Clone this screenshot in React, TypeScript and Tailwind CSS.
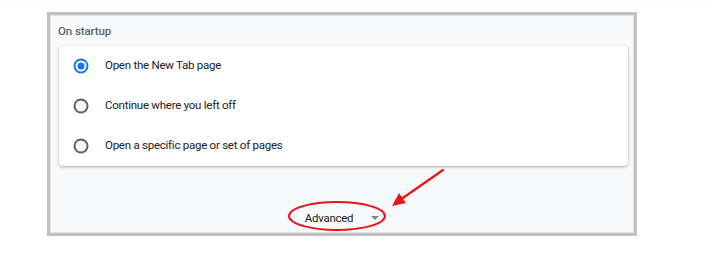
import React from "react";

const options = [
  { label: "Open the New Tab page", checked: true },
  { label: "Continue where you left off", checked: false },
  { label: "Open a specific page or set of pages", checked: false },
];

function Radio({ checked }: { checked: boolean }) {
  return (
    <svg width="16" height="16" viewBox="0 0 16 16">
      {checked ? (
        <>
          <circle cx="8" cy="8" r="6.5" fill="none" stroke="#1a73e8" strokeWidth="2" />
          <circle cx="8" cy="8" r="3.5" fill="#1a73e8" />
        </>
      ) : (
        <circle cx="8" cy="8" r="6.5" fill="none" stroke="#5f6368" strokeWidth="2" />
      )}
    </svg>
  );
}

export default function App() {
  return (
    <div
      className="relative w-[705px] h-[279px] bg-white overflow-hidden"
      style={{ fontFamily: "Roboto, 'Liberation Sans', sans-serif" }}
    >
      <div className="h-[6px] bg-[#fcfcfc]" />
      <div className="ml-[47px] mt-[6px] w-[590px] h-[224px] border-[3px] border-[#c1c1c1]">
        <div className="h-full border border-[#e4e4e4] bg-[#f8f9fa] flex flex-col">
          <div className="h-[30px] pl-[7px] pt-[2px] flex items-center text-[11.5px] tracking-[-0.1px] font-medium text-[#5f6368]">
            On startup
          </div>
          <div className="ml-[8px] w-[569px] bg-white rounded-[4px] shadow-[0_1px_2px_rgba(60,64,67,0.3),0_1px_3px_1px_rgba(60,64,67,0.1)] flex flex-col">
            {options.map((o) => (
              <div key={o.label} className="h-[40px] flex items-center">
                <div className="w-[46px] pl-[14px] flex items-center">
                  <Radio checked={o.checked} />
                </div>
                <span className="text-[11.5px] tracking-[-0.25px] text-[#202124]">{o.label}</span>
              </div>
            ))}
          </div>
          <div className="flex-1 flex items-end justify-center pb-[5px]">
            <div className="flex items-center gap-[18px]">
              <span className="text-[11.5px] tracking-[-0.25px] text-[#202124]">Advanced</span>
              <svg width="8" height="5" viewBox="0 0 8 5">
                <path d="M0 0 L8 0 L4 4 Z" fill="#80868b" />
              </svg>
            </div>
          </div>
        </div>
      </div>
      <svg className="absolute left-0 top-0" width="705" height="279">
        <ellipse cx="337" cy="216" rx="48" ry="14" fill="none" stroke="#e8141b" strokeWidth="2" />
        <line x1="443" y1="170" x2="400" y2="200" stroke="#e8141b" strokeWidth="2.2" strokeLinecap="round" />
        <polygon points="392,206 399,193 406,203" fill="#e8141b" />
      </svg>
    </div>
  );
}
